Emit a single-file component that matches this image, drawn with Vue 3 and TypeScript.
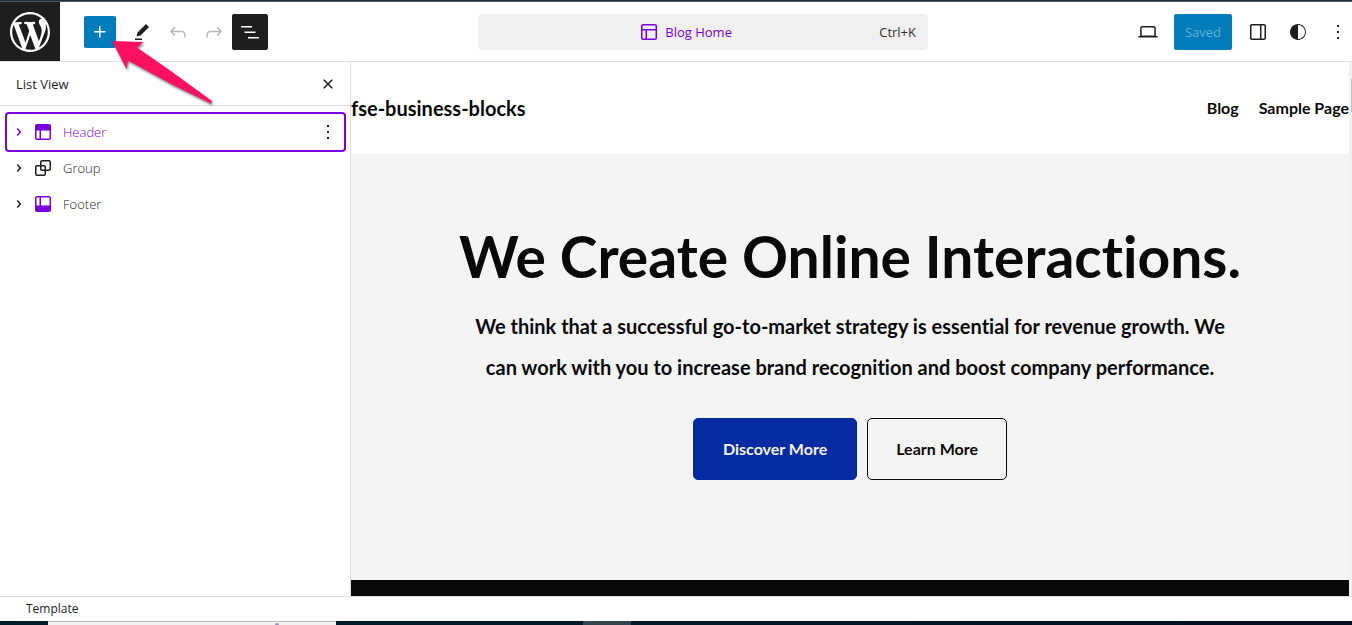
<script setup lang="ts">
import { ref } from 'vue'

interface Block {
  name: string
  icon: string
  synced: boolean
}

const icons = {
  wordpress:
    'M20 10c0-5.51-4.49-10-10-10C4.48 0 0 4.49 0 10c0 5.52 4.48 10 10 10 5.51 0 10-4.48 10-10zM7.78 15.37L4.37 6.22c.55-.02 1.17-.08 1.17-.08.5-.06.44-1.13-.06-1.11 0 0-1.45.11-2.37.11-.18 0-.37 0-.58-.01C4.12 2.69 6.87 1.11 10 1.11c2.33 0 4.45.87 6.05 2.34-.68-.11-1.65.39-1.65 1.58 0 .74.45 1.36.9 2.1.35.61.55 1.36.55 2.46 0 1.49-1.4 5-1.4 5l-3.03-8.37c.54-.02.82-.17.82-.17.5-.05.44-1.25-.06-1.22 0 0-1.44.12-2.38.12-.87 0-2.33-.12-2.33-.12-.5-.03-.56 1.2-.06 1.22l.92.08 1.26 3.41zM17.41 10c.24-.64.74-1.87.43-4.25.7 1.29 1.05 2.71 1.05 4.25 0 3.29-1.73 6.24-4.4 7.78.97-2.59 1.94-5.2 2.92-7.78zM6.1 18.09C3.12 16.65 1.11 13.53 1.11 10c0-1.3.23-2.48.72-3.59C3.25 10.3 4.67 14.2 6.1 18.09zm4.03-6.63l2.58 6.98c-.86.29-1.76.45-2.71.45-.79 0-1.57-.11-2.29-.33.81-2.38 1.62-4.74 2.42-7.1z',
  plus: 'M11 12.5V17.5H12.5V12.5H17.5V11H12.5V6H11V11H6V12.5H11Z',
  edit: 'm19 7-3-3-8.5 8.5-1 4 4-1L19 7Zm-7 11.5H5V20h7v-1.5Z',
  undo: 'M18.3 11.7c-.6-.6-1.4-.9-2.3-.9H6.7l2.9-3.3-1.1-1-4.5 5L8.5 16l1-1-2.7-2.7H16c.5 0 .9.2 1.3.5 1 1 1 3.4 1 4.5v.3h1.5v-.2c0-1.5 0-4.3-1.5-5.7z',
  redo: 'M15.6 6.5l-1.1 1 2.9 3.3H8c-.9 0-1.7.3-2.3.9-1.4 1.5-1.4 4.2-1.4 5.6v.2h1.5v-.3c0-1.1 0-3.5 1-4.5.3-.3.7-.5 1.3-.5h9.2L14.5 15l1.1 1.1 4.6-4.6-4.6-5z',
  listView: 'M3 6h11v1.5H3V6Zm3.5 5.5h11V13h-11v-1.5ZM21 17H10v1.5h11V17Z',
  layout:
    'M18 5.5H6a.5.5 0 00-.5.5v3h13V6a.5.5 0 00-.5-.5zm.5 5H10v8h8a.5.5 0 00.5-.5v-7.5zm-10 0h-3V18a.5.5 0 00.5.5h2.5v-8zM6 4h12a2 2 0 012 2v12a2 2 0 01-2 2H6a2 2 0 01-2-2V6a2 2 0 012-2z',
  header:
    'M18.5 10.5H10v8h8a.5.5 0 00.5-.5v-7.5zm-10 0h-3V18a.5.5 0 00.5.5h2.5v-8zM6 4h12a2 2 0 012 2v12a2 2 0 01-2 2H6a2 2 0 01-2-2V6a2 2 0 012-2z',
  footer:
    'M18 5.5h-8v8h8.5V6a.5.5 0 00-.5-.5zm-9.5 8h-3V6a.5.5 0 01.5-.5h2.5v8zM6 4h12a2 2 0 012 2v12a2 2 0 01-2 2H6a2 2 0 01-2-2V6a2 2 0 012-2z',
  group:
    'M18 4h-7c-1.1 0-2 .9-2 2v3H6c-1.1 0-2 .9-2 2v7c0 1.1.9 2 2 2h7c1.1 0 2-.9 2-2v-3h3c1.1 0 2-.9 2-2V6c0-1.1-.9-2-2-2zm-4.5 14c0 .3-.2.5-.5.5H6c-.3 0-.5-.2-.5-.5v-7c0-.3.2-.5.5-.5h3V13c0 1.1.9 2 2 2h2.5v3zm0-4.5H11c-.3 0-.5-.2-.5-.5v-2.5H13c.3 0 .5.2.5.5v2.5zm5-.5c0 .3-.2.5-.5.5h-3V11c0-1.1-.9-2-2-2h-2.5V6c0-.3.2-.5.5-.5h7c.3 0 .5.2.5.5v7z',
  desktop:
    'M20.5 16h-.7V8c0-1.1-.9-2-2-2H6.2c-1.1 0-2 .9-2 2v8h-.7c-.8 0-1.5.7-1.5 1.5h20c0-.8-.7-1.5-1.5-1.5zM5.7 8c0-.3.2-.5.5-.5h11.6c.3 0 .5.2.5.5v7.6H5.7V8z',
  drawer:
    'M18 4H6c-1.1 0-2 .9-2 2v12c0 1.1.9 2 2 2h12c1.1 0 2-.9 2-2V6c0-1.1-.9-2-2-2zm-4 14.5H6c-.3 0-.5-.2-.5-.5V6c0-.3.2-.5.5-.5h8v13zm4.5-.5c0 .3-.2.5-.5.5h-2.5v-13H18c.3 0 .5.2.5.5v12z',
  styles:
    'M12 4c-4.4 0-8 3.6-8 8v.1c0 4.1 3.2 7.5 7.2 7.9h.8c4.4 0 8-3.6 8-8s-3.6-8-8-8zm0 15V5c3.9 0 7 3.1 7 7s-3.1 7-7 7z',
  more: 'M13 19h-2v-2h2v2zm0-6h-2v-2h2v2zm0-6h-2V5h2v2z',
  close:
    'M12 13.06l3.712 3.713 1.061-1.06L13.061 12l3.712-3.712-1.06-1.06L12 10.938 8.288 7.227l-1.061 1.06L10.939 12l-3.712 3.712 1.06 1.061L12 13.061z',
  chevron:
    'M10.8622 8.04053L14.2805 12.0286L10.8622 16.0167L9.72327 15.0405L12.3049 12.0286L9.72327 9.01672L10.8622 8.04053Z',
}

const blocks: Block[] = [
  { name: 'Header', icon: icons.header, synced: true },
  { name: 'Group', icon: icons.group, synced: false },
  { name: 'Footer', icon: icons.footer, synced: true },
]
const selected = ref('Header')
</script>

<template>
  <div class="editor">
    <div class="window-edge"></div>
    <header class="topbar">
      <a class="logo" href="#" aria-label="WordPress">
        <svg viewBox="-2 -2 24 24"><path :d="icons.wordpress" /></svg>
      </a>
      <div class="tools">
        <button class="inserter" type="button" aria-label="Add block">
          <svg viewBox="0 0 24 24"><path :d="icons.plus" /></svg>
        </button>
        <button class="tool" type="button" aria-label="Edit">
          <svg viewBox="0 0 24 24"><path :d="icons.edit" /></svg>
        </button>
        <button class="tool" type="button" aria-label="Undo" disabled>
          <svg viewBox="0 0 24 24"><path :d="icons.undo" /></svg>
        </button>
        <button class="tool" type="button" aria-label="Redo" disabled>
          <svg viewBox="0 0 24 24"><path :d="icons.redo" /></svg>
        </button>
        <button class="tool pressed" type="button" aria-label="List View" aria-pressed="true">
          <svg viewBox="0 0 24 24"><path :d="icons.listView" /></svg>
        </button>
        <svg class="pointer" viewBox="0 0 110 72" aria-hidden="true">
          <path d="M4 5L35.500 6L29 11.500L60 33L104 65L103 67.500L65 49L20 24.500L18.500 33Z" />
        </svg>
      </div>
      <div class="center">
        <button class="command" type="button">
          <span class="doc">
            <svg viewBox="0 0 24 24"><path :d="icons.layout" /></svg>
            <span>Blog Home</span>
          </span>
          <span class="shortcut">Ctrl+K</span>
        </button>
      </div>
      <div class="actions">
        <button class="tool" type="button" aria-label="View">
          <svg viewBox="0 0 24 24"><path :d="icons.desktop" /></svg>
        </button>
        <button class="save" type="button" disabled>Saved</button>
        <div class="panels">
          <button class="tool" type="button" aria-label="Settings">
            <svg viewBox="0 0 24 24"><path :d="icons.drawer" /></svg>
          </button>
          <button class="tool" type="button" aria-label="Styles">
            <svg viewBox="0 0 24 24"><path :d="icons.styles" /></svg>
          </button>
          <button class="tool" type="button" aria-label="Options">
            <svg viewBox="0 0 24 24"><path :d="icons.more" /></svg>
          </button>
        </div>
      </div>
    </header>

    <div class="body">
      <aside class="sidebar">
        <div class="side-head">
          <span>List View</span>
          <button class="mini" type="button" aria-label="Close">
            <svg viewBox="0 0 24 24"><path :d="icons.close" /></svg>
          </button>
        </div>
        <ul class="tree">
          <li
            v-for="block in blocks"
            :key="block.name"
            :class="{ selected: block.name === selected }"
          >
            <button class="row" type="button" @click="selected = block.name">
              <svg viewBox="0 0 24 24"><path :d="icons.chevron" /></svg>
              <svg :class="{ synced: block.synced }" viewBox="0 0 24 24">
                <path :d="block.icon" />
              </svg>
              <span>{{ block.name }}</span>
            </button>
            <button
              v-if="block.name === selected"
              class="mini"
              type="button"
              aria-label="Block options"
            >
              <svg viewBox="0 0 24 24"><path :d="icons.more" /></svg>
            </button>
          </li>
        </ul>
      </aside>

      <main class="canvas">
        <div class="site-head">
          <a class="site-title" href="#">fse-business-blocks</a>
          <nav>
            <a href="#">Blog</a>
            <a href="#">Sample Page</a>
          </nav>
        </div>
        <section class="hero">
          <h1>We Create Online Interactions.</h1>
          <p>
            We think that a successful go-to-market strategy is essential for revenue growth. We
            can work with you to increase brand recognition and boost company performance.
          </p>
          <div class="cta">
            <a class="primary" href="#">Discover More</a>
            <a class="outline" href="#">Learn More</a>
          </div>
        </section>
        <div class="band"></div>
      </main>
      <div class="scrollbar"><div class="thumb"></div></div>
    </div>

    <footer class="breadcrumb">Template</footer>
    <div class="taskbar">
      <div class="search"><i></i></div>
      <div class="task"></div>
    </div>
  </div>
</template>

<style>
body {
  margin: 0;
}
</style>

<style scoped>
.editor {
  display: flex;
  flex-direction: column;
  height: 100vh;
  overflow: hidden;
  background: #fff;
  color: #1e1e1e;
  font: 13px/20px 'Open Sans', 'Noto Sans', sans-serif;
}
button {
  display: flex;
  align-items: center;
  justify-content: center;
  padding: 0;
  border: 0;
  border-radius: 2px;
  background: none;
  color: inherit;
  font: inherit;
}
a {
  color: inherit;
  text-decoration: none;
}
svg {
  width: 24px;
  height: 24px;
  flex: none;
  fill: currentColor;
  fill-rule: evenodd;
}
.window-edge {
  height: 2px;
  flex: none;
  background: linear-gradient(#202d38 50%, #4c5964 50%);
}
.topbar {
  display: flex;
  align-items: center;
  flex: none;
  height: 59px;
  border-bottom: 1px solid #e0e0e0;
}
.logo {
  display: flex;
  align-items: center;
  justify-content: center;
  align-self: stretch;
  width: 60px;
  background: #1e1e1e;
  color: #fff;
}
.logo svg {
  width: 48px;
  height: 48px;
}
.tools {
  position: relative;
  display: flex;
  align-items: center;
  padding-left: 24px;
}
.inserter {
  width: 32px;
  height: 32px;
  margin-right: 8px;
  background: #007cba;
  color: #fff;
}
.tool {
  width: 36px;
  height: 36px;
}
.tool:disabled {
  color: #b8b8b8;
}
.tool.pressed {
  background: #1e1e1e;
  color: #fff;
}
.pointer {
  position: absolute;
  z-index: 2;
  left: 48px;
  top: 22px;
  width: 110px;
  height: 72px;
  fill: #ff1060;
  filter: drop-shadow(1px 2px 1px #0007);
}
.center {
  display: flex;
  justify-content: center;
  flex: 1;
  padding-left: 8px;
}
.command {
  width: 450px;
  height: 36px;
  padding: 0 12px;
  border-radius: 4px;
  background: #f0f0f0;
}
.doc {
  display: flex;
  align-items: center;
  justify-content: center;
  gap: 4px;
  flex: 1;
  color: #7a00df;
}
.shortcut {
  color: #2f2f2f;
}
.actions {
  display: flex;
  gap: 8px;
  margin-right: -4px;
}
.panels {
  display: flex;
  gap: 4px;
}
.save {
  width: 58px;
  height: 36px;
  background: #007cba;
  color: #66b0d6;
}
.body {
  display: flex;
  flex: 1;
  min-height: 0;
}
.sidebar {
  width: 350px;
  flex: none;
  border-right: 1px solid #ddd;
}
.side-head {
  display: flex;
  align-items: center;
  justify-content: space-between;
  height: 43px;
  padding: 0 10px 0 16px;
  border-bottom: 1px solid #ddd;
}
.tree {
  margin: 0;
  padding: 8px 6px 8px 7px;
  list-style: none;
}
.tree li {
  display: flex;
  align-items: center;
  height: 36px;
  padding-right: 4px;
  border-radius: 2px;
}
.tree .selected {
  color: #7a00df;
  box-shadow: 0 0 0 2px #7a00df;
}
.row {
  flex: 1;
  height: 36px;
  justify-content: flex-start;
}
.row span {
  padding-left: 8px;
  font-weight: 300;
}
.synced {
  color: #7a00df;
}
.mini {
  width: 24px;
  height: 24px;
  color: #1e1e1e;
}
.canvas {
  display: flex;
  flex-direction: column;
  flex: 1;
  min-width: 0;
  color: #0a090a;
  font-family: 'Lato', sans-serif;
  font-weight: 700;
  font-variant-ligatures: none;
}
.site-head {
  display: flex;
  align-items: center;
  justify-content: space-between;
  height: 92px;
  flex: none;
}
.site-title {
  font-size: 20px;
}
nav {
  display: flex;
  gap: 20px;
  font-size: 16px;
}
.hero {
  flex: 1;
  padding: 62px 32px 0;
  background: #f4f4f4;
  text-align: center;
}
h1 {
  margin: 0;
  font-size: 57px;
  line-height: 80px;
}
p {
  max-width: 780px;
  margin: 10px auto 30px;
  font-size: 20px;
  line-height: 41px;
}
.cta {
  display: flex;
  justify-content: center;
  gap: 10px;
  font-size: 16px;
  line-height: 60px;
}
.cta a {
  border: 1px solid #0a090a;
  border-radius: 5px;
}
.cta .primary {
  padding: 0 29px;
  border-color: #052ba3;
  background: #052ba3;
  color: #f4f4f4;
}
.cta .outline {
  padding: 0 28px;
}
.band {
  height: 16px;
  flex: none;
  background: #0a090a;
}
.scrollbar {
  width: 3px;
  flex: none;
  padding-top: 17px;
  background: #f1f1f1;
}
.thumb {
  width: 1px;
  height: 33px;
  margin-left: auto;
  background: #c1c1c1;
}
.breadcrumb {
  flex: none;
  height: 24px;
  padding-left: 26px;
  border-top: 1px solid #ddd;
  font-size: 12px;
  line-height: 24px;
}
.taskbar {
  display: flex;
  flex: none;
  height: 4px;
  padding-left: 48px;
  background: linear-gradient(90deg, #001c28, #001828 50%, #000c1c);
}
.search {
  display: flex;
  justify-content: flex-end;
  box-sizing: border-box;
  width: 288px;
  padding: 1px 48px 0 0;
  border-top: 1px solid #bbb;
  background: #f2f2f2;
}
.search i {
  width: 4px;
  margin-right: 9px;
  border-radius: 2px 2px 0 0;
  background: #9a8cb8;
}
.task {
  width: 48px;
  margin-left: 247px;
  background: #34444f;
}
</style>
